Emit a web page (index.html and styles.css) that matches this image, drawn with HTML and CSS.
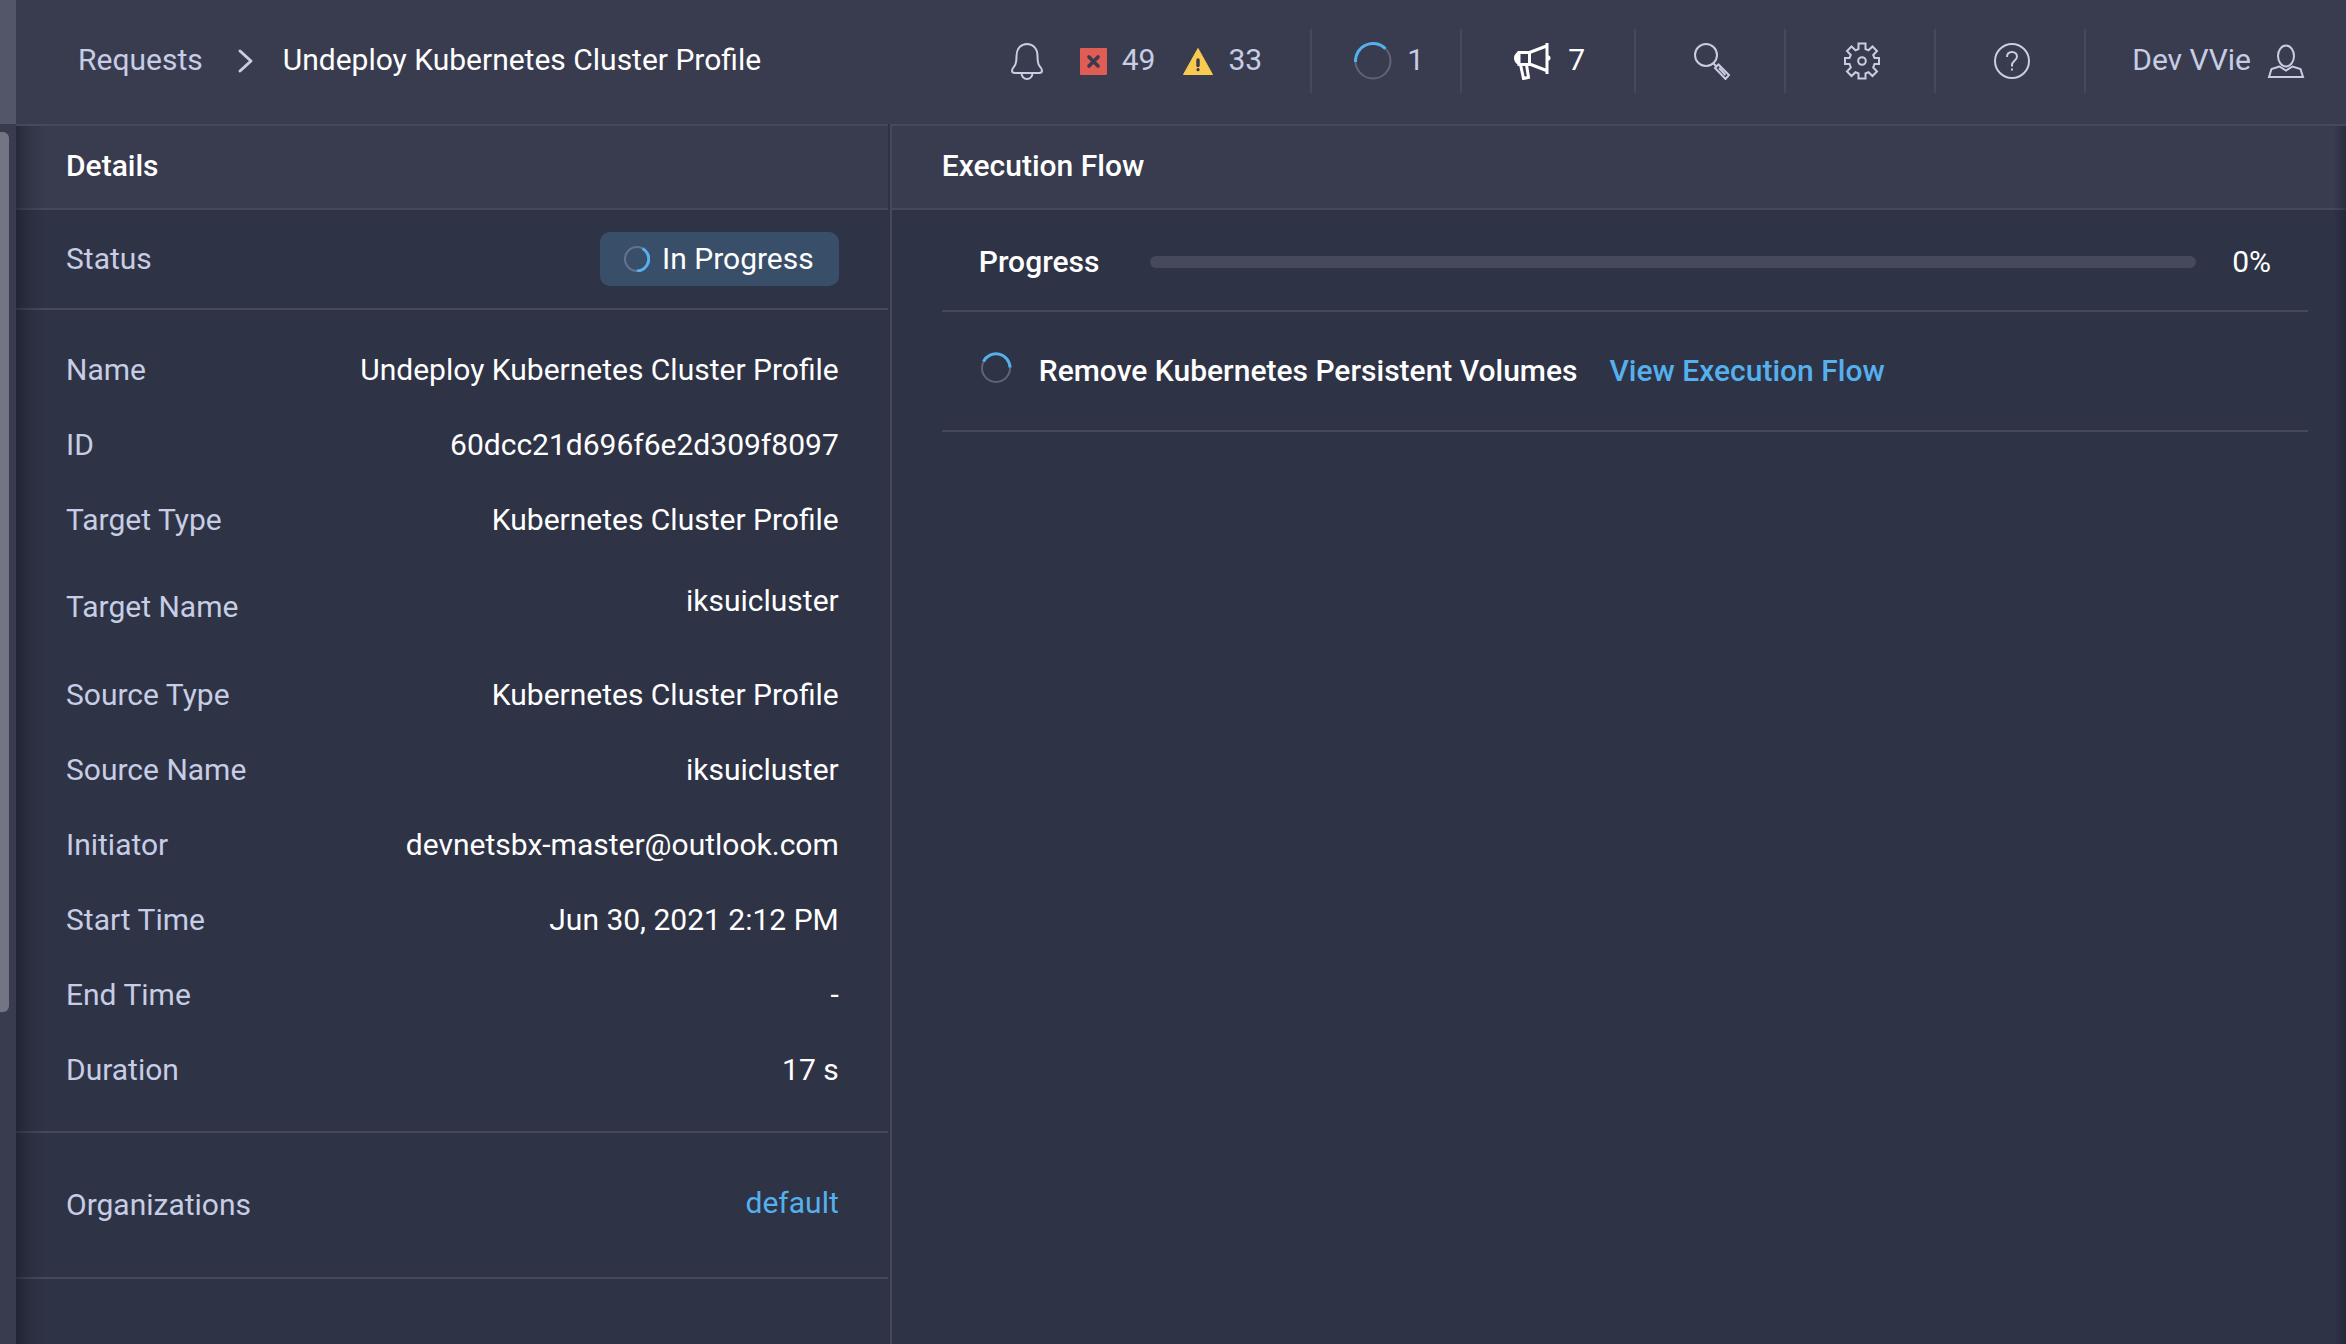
FILE: index.html
```html
<!DOCTYPE html>
<html lang="en">
<head>
<meta charset="utf-8">
<title>Undeploy Kubernetes Cluster Profile</title>
<meta name="viewport" content="width=device-width, initial-scale=1">
<link rel="stylesheet" href="styles.css">
</head>
<body>
<div class="app">
  <header class="topbar">
    <nav class="breadcrumb" aria-label="Breadcrumb">
      <a href="#requests" class="crumb">Requests</a>
      <svg class="chevron" viewBox="0 0 18 26" width="18" height="26" aria-hidden="true"><path d="M3 3l11 10L3 23"/></svg>
      <h1 class="crumb-current">Undeploy Kubernetes Cluster Profile</h1>
    </nav>
    <div class="tools">
      <button type="button" class="tool tool-alarms" aria-label="Alarms">
        <svg class="icon bell" viewBox="0 0 34 38" width="34" height="38" aria-hidden="true"><path d="M6.500 14C6.500 6.500 11 2 17 2s10.500 4.500 10.500 12c0 5 .500 8 2 10 1.500 1.700 2.500 2.800 2.500 4.500 0 1.700-1 2.500-3 2.500H5c-2 0-3-.8-3-2.500 0-1.700 1-2.800 2.500-4.500 1.500-2 2-5 2-10zM11.500 31c0 3.500 2.500 6 5.500 6s5.500-2.500 5.500-6"/></svg>
        <svg class="critical" viewBox="0 0 27 27" width="27" height="27" aria-hidden="true"><rect width="27" height="27" rx="1" fill="#e05d55"/><path d="M9 9l9 9M18 9l-9 9" stroke="#393c4f" stroke-width="3.600" stroke-linecap="round"/></svg>
        <span class="count">49</span>
        <svg class="warning" viewBox="0 0 30 27" width="30" height="27" aria-hidden="true"><path d="M15 .500L29.500 26.500H.500z" fill="#f9ca50" stroke="#f9ca50" stroke-linejoin="round"/><path d="M15 12v5.500" stroke="#393c4f" stroke-width="3.400" stroke-linecap="round"/><circle cx="15" cy="21.700" r="1.600" fill="#393c4f"/></svg>
        <span class="count">33</span>
      </button>
      <button type="button" class="tool tool-tasks" aria-label="Running requests">
        <svg class="spinner" viewBox="0 0 38 38" width="38" height="38" aria-hidden="true"><circle class="track" cx="19" cy="19" r="17.500"/><path class="arc" d="M1.500 20A17.500 17.500 0 0 1 31.500 6.800"/></svg>
        <span class="count">1</span>
      </button>
      <button type="button" class="tool tool-news" aria-label="Announcements">
        <svg class="icon news" viewBox="0 0 38 38" width="38" height="38" aria-hidden="true"><path d="M6 10.500h10.500v12H6zM16.500 10.500L33.500 4M16.500 22L33.500 28.500M34 1v31M7.500 22.500l3 14 5-1.200-2-12.500"/><path d="M6 9.500c-3.500 1-5 4-5 6.500s1.500 6 5 7zM34.500 13c2.300.5 3 1.500 3 3s-.7 2.500-3 3z" fill="#fff" stroke="none"/></svg>
        <span class="count">7</span>
      </button>
      <button type="button" class="tool tool-icon" aria-label="Search">
        <svg class="icon" viewBox="0 0 38 38" width="38" height="38" aria-hidden="true"><circle cx="13" cy="13" r="11"/><path d="M20.500 21.500l3 3M22 26l3.500-3.500L36 33l-3.500 4zM26 26l6.500 7"/></svg>
      </button>
      <button type="button" class="tool tool-icon" aria-label="Settings">
        <svg class="icon" viewBox="0 0 38 38" width="38" height="38" aria-hidden="true"><path d="M15.500 1.500h7v5.500l3 1.300 4-3.800 4.500 4.500-3.800 4 1.300 3H36v6h-4.500l-1.300 3.500 3.800 4-4.500 4.500-4-3.800-3 1.300v5h-7v-5l-3-1.300-4 3.800L4 29.500l3.800-4L6.500 22H2v-6h4.500l1.300-3L4 9l4.500-4.500 4 3.800 3-1.300z"/><circle cx="19" cy="19" r="3.800"/></svg>
      </button>
      <button type="button" class="tool tool-icon" aria-label="Help">
        <svg class="icon" viewBox="0 0 38 38" width="38" height="38" aria-hidden="true"><circle cx="19" cy="19" r="17"/><path d="M14 15c0-3 2-5 5-5s5 2 5 4.500c0 4-5 4.500-5 8.500v1.500M19 26.500v2"/></svg>
      </button>
      <button type="button" class="tool tool-user">
        <span class="count">Dev VVie</span>
        <svg class="icon" viewBox="0 0 38 34" width="38" height="34" aria-hidden="true"><ellipse cx="19" cy="12" rx="8" ry="10.500"/><path d="M12.500 22.500L4.500 25 2 33h34l-2.500-8-8-2.500L19 26.500z"/></svg>
      </button>
    </div>
  </header>
  <div class="body">
    <aside class="rail" aria-hidden="true"><div class="rail-thumb"></div></aside>
    <main class="panels">
      <section class="panel details">
        <h2 class="panel-title">Details</h2>
        <dl class="group status">
          <div class="row"><dt>Status</dt>
            <dd class="badge"><svg class="spinner" viewBox="0 0 26 26" width="26" height="26" aria-hidden="true"><circle class="track" cx="13" cy="13" r="12"/><path class="arc" d="M18.500 2.500A12 12 0 0 1 13 25"/></svg>In Progress</dd></div>
        </dl>
        <dl class="group facts">
          <div class="row"><dt>Name</dt><dd>Undeploy Kubernetes Cluster Profile</dd></div>
          <div class="row"><dt>ID</dt><dd>60dcc21d696f6e2d309f8097</dd></div>
          <div class="row"><dt>Target Type</dt><dd>Kubernetes Cluster Profile</dd></div>
          <div class="row row-tall"><dt>Target Name</dt><dd>iksuicluster</dd></div>
          <div class="row"><dt>Source Type</dt><dd>Kubernetes Cluster Profile</dd></div>
          <div class="row"><dt>Source Name</dt><dd>iksuicluster</dd></div>
          <div class="row"><dt>Initiator</dt><dd>devnetsbx-master@outlook.com</dd></div>
          <div class="row"><dt>Start Time</dt><dd>Jun 30, 2021 2:12 PM</dd></div>
          <div class="row"><dt>End Time</dt><dd>-</dd></div>
          <div class="row"><dt>Duration</dt><dd>17 s</dd></div>
        </dl>
        <dl class="group orgs">
          <div class="row"><dt>Organizations</dt><dd><a href="#default">default</a></dd></div>
        </dl>
      </section>
      <section class="panel flow">
        <h2 class="panel-title">Execution Flow</h2>
        <div class="flow-body">
          <div class="overall">
            <label for="overall-progress">Progress</label>
            <progress id="overall-progress" max="100" value="0">0%</progress>
            <span>0%</span>
          </div>
          <div class="step">
            <svg class="spinner" viewBox="0 0 32 32" width="32" height="32" aria-hidden="true"><circle class="track" cx="16" cy="16" r="14"/><path class="arc" d="M3.500 9.500A14 14 0 0 1 30 15.500"/></svg>
            <span>Remove Kubernetes Persistent Volumes</span>
            <a href="#flow">View Execution Flow</a>
          </div>
        </div>
      </section>
    </main>
  </div>
</div>
</body>
</html>
```
FILE: styles.css
```css
:root {
  --bar: #393c4f;
  --panel: #2f3346;
  --line: #46495c;
  --muted: #c6cde4;
  --link: #55b0ee;
}

* { box-sizing: border-box; }

body {
  margin: 0;
  background: var(--panel);
  color: #fff;
  font: 400 30px/36px Roboto, sans-serif;
}

h1, h2, dl, dd { margin: 0; font-size: inherit; }
a { color: var(--link); text-decoration: none; }
svg { display: block; flex: none; fill: none; }

.app { display: flex; flex-direction: column; min-height: 100vh; }

/* Top bar */
.topbar {
  display: flex;
  justify-content: space-between;
  align-items: center;
  height: 124px;
  padding-bottom: 2px;
  background: var(--bar);
  border-left: 16px solid #525668;
}
.breadcrumb { display: flex; align-items: center; padding-left: 62px; }
.crumb { color: var(--muted); }
.crumb, .crumb-current, .count { padding-bottom: 2px; }
.chevron { margin: 0 28px 0 34px; stroke: var(--muted); stroke-width: 3; stroke-linecap: round; stroke-linejoin: round; }
.crumb-current { font-weight: 400; }

.tools { display: flex; align-items: center; }
.tool {
  display: flex;
  align-items: center;
  height: 64px;
  padding: 0;
  border: 0;
  border-left: 2px solid var(--line);
  background: none;
  color: var(--muted);
  font: inherit;
  cursor: pointer;
}
.icon { stroke: currentColor; stroke-width: 2; }
.tool-alarms { border-left: 0; padding-right: 48px; }
.critical { margin: 0 15px 0 36px; }
.warning { margin: 0 15px 0 28px; }
.tool-tasks { width: 150px; padding-left: 42px; gap: 15px; }
.tool-news { width: 174px; padding-left: 51px; gap: 17px; color: #fff; }
.news { stroke-width: 3; }
.tool-icon { width: 150px; padding-left: 57px; }
.tool-user { padding: 0 41px 0 46px; gap: 16px; }

.spinner .track { stroke: #606478; stroke-width: 2; }
.spinner .arc { stroke: var(--link); stroke-width: 3; }

/* Page body */
.body { display: flex; flex: 1; }
.rail { width: 16px; padding-top: 8px; background: var(--bar); }
.rail-thumb { width: 9px; height: 880px; border-radius: 0 6px 6px 0; background: #737585; }

.panels { position: relative; flex: 1; display: grid; grid-template-columns: 3fr 5fr; }
.panels::after {
  content: "";
  position: absolute;
  inset: 2px 0 0;
  pointer-events: none;
  background:
    linear-gradient(to right, rgba(20, 22, 34, .5), rgba(20, 22, 34, .2) 12px, transparent 30px),
    linear-gradient(to left, rgba(20, 22, 34, .4), transparent 12px);
}
.panel-title {
  height: 86px;
  padding: 22px 50px 0;
  border: solid var(--line);
  border-width: 2px 0;
  background: var(--bar);
  font-weight: 500;
}
.details { padding-right: 2px; }
.flow { border-left: 2px solid var(--line); }

/* Details */
.group { padding: 0 49px 0 50px; border-bottom: 2px solid var(--line); }
.row { display: flex; justify-content: space-between; align-items: center; height: 75px; }
.row dt { color: var(--muted); }
.status .row { height: 98px; }
.facts { padding-top: 22px; padding-bottom: 24px; }
.row-tall { height: 100px; }
.row-tall dd { padding-bottom: 12px; }
.orgs .row { height: 144px; }
.orgs dd { padding-bottom: 4px; }
.badge {
  display: flex;
  align-items: center;
  gap: 12px;
  height: 54px;
  padding: 0 25px 0 24px;
  border-radius: 10px;
  background: #394f69;
}
.badge .track { stroke: #64748c; }

/* Execution flow */
.flow-body { margin: 0 38px 0 50px; font-weight: 500; }
.overall {
  display: flex;
  align-items: center;
  height: 102px;
  padding: 4px 37px 0;
  border-bottom: 2px solid var(--line);
}
.overall span { font-weight: 400; }
progress {
  appearance: none;
  flex: 1;
  height: 12px;
  margin: 0 36px 0 51px;
  border: 0;
  border-radius: 6px;
  overflow: hidden;
  background: var(--line);
}
progress::-webkit-progress-bar { background: var(--line); }
progress::-webkit-progress-value { background: var(--link); }
.step {
  display: flex;
  align-items: center;
  height: 120px;
  padding-left: 38px;
  border-bottom: 2px solid var(--line);
}
.step .spinner { margin: 0 27px 6px 0; }
.step a { margin-left: 32px; }
```
